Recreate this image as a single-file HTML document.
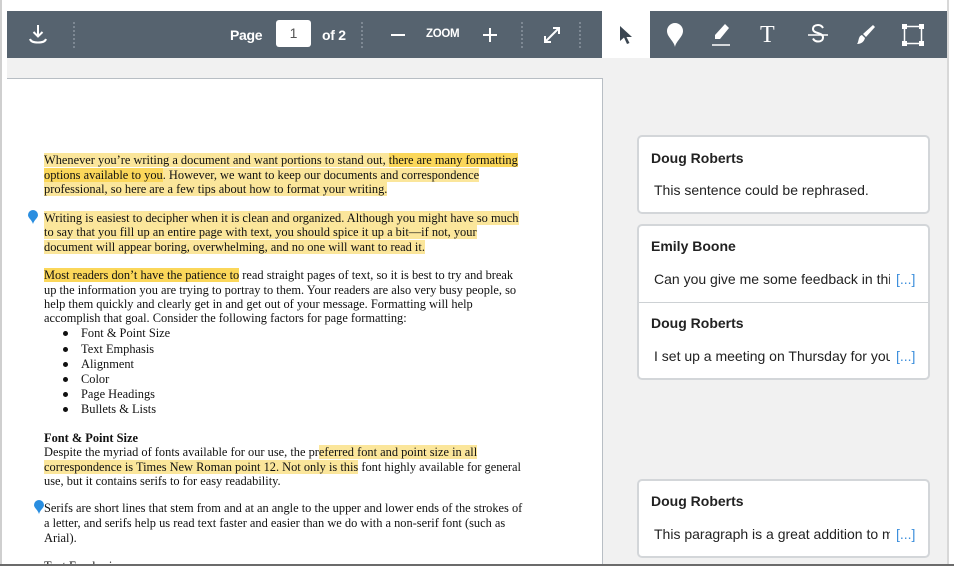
<!DOCTYPE html>
<html><head><meta charset="utf-8"><style>
*{margin:0;padding:0;box-sizing:border-box}
body{width:954px;height:572px;background:#fff;position:relative;overflow:hidden;font-family:"Liberation Sans",sans-serif}
.abs{position:absolute}
.tb{position:absolute;top:11px;height:47px;background:#56636f}
.sep{position:absolute;top:22px;height:26px;border-left:2px dotted #7d8893}
.tt{position:absolute;color:#fff;font-size:14px;font-weight:bold;top:27px;letter-spacing:-0.3px}
.ln{position:absolute;left:44px;font-family:"Liberation Serif",serif;font-size:12.4px;white-space:nowrap;color:#111;line-height:14px}
.h{background:#fbe69b}
.d{background:#fbd75a}
.card{position:absolute;left:637px;width:293px;background:#fff;border:2px solid #d3d6d9;border-radius:5px}
.nm{position:absolute;left:12px;font-size:14px;font-weight:bold;color:#222}
.bd{position:absolute;left:15px;font-size:14px;color:#222;white-space:nowrap;width:236px;overflow:hidden}
.more{position:absolute;left:257px;font-size:14px;color:#3d8fdc}
.bl{position:absolute;left:63px;width:5px;height:5px;border-radius:50%;background:#111}
</style></head><body>
<div class="abs" style="left:0;top:0;width:2px;height:566px;background:#cfcfcf"></div>
<div class="abs" style="left:947px;top:0;width:2px;height:566px;background:#d8d8d8"></div>
<div class="abs" style="left:7px;top:58px;width:940px;height:507px;background:#f1f1f1"></div>
<div class="abs" style="left:0;top:564px;width:954px;height:2px;background:#6b6b6b"></div>
<!-- page -->
<div class="abs" style="left:7px;top:78px;width:596px;height:486px;background:#fff;border-top:1px solid #b8bec4;border-right:1px solid #b8bec4"></div>

<!-- toolbar -->
<div class="tb" style="left:7px;width:595px"></div>
<div class="abs" style="left:602px;top:11px;width:48px;height:47px;background:#fff"></div>
<div class="tb" style="left:650px;width:297px"></div>
<svg class="abs" style="left:28px;top:24px" width="20" height="22" viewBox="0 0 20 22"><path d="M10 1v11M5.5 8l4.5 4.5 4.5-4.5" stroke="#fff" stroke-width="2" fill="none"/><path d="M2 15c1 3 4 3.5 8 3.5s7-.5 8-3.5" stroke="#fff" stroke-width="2" fill="none"/></svg>
<div class="sep" style="left:73px"></div>
<div class="tt" style="left:230px">Page</div>
<div class="abs" style="left:276px;top:20px;width:35px;height:27px;background:#fff;border-radius:3px;color:#555;font-size:14px;text-align:center;line-height:27px">1</div>
<div class="tt" style="left:322px">of 2</div>
<div class="sep" style="left:361px"></div>
<div class="abs" style="left:391px;top:34px;width:14px;height:2px;background:#fff"></div>
<div class="tt" style="left:426px;font-size:11.5px;top:28px">ZOOM</div>
<div class="abs" style="left:483px;top:34px;width:14px;height:2px;background:#fff"></div>
<div class="abs" style="left:489px;top:28px;width:2px;height:14px;background:#fff"></div>
<div class="sep" style="left:521px"></div>
<svg class="abs" style="left:542px;top:25px" width="20" height="20" viewBox="0 0 20 20"><path d="M3 17L17 3M11 3h6v6M3 11v6h6" stroke="#fff" stroke-width="2" fill="none"/></svg>
<div class="sep" style="left:579px"></div>
<svg class="abs" style="left:619px;top:25px" width="14" height="22" viewBox="0 0 14 22"><path d="M1 1v15l4-3.5 3 6.5 2.5-1-3-6H13z" fill="#3b4651"/></svg>
<svg class="abs" style="left:665px;top:22px" width="20" height="26" viewBox="0 0 20 26"><path d="M10 25C9 19 2 15 2 9a8 8 0 0116 0c0 6-7 10-8 16z" fill="#fff"/></svg>
<svg class="abs" style="left:710px;top:22px" width="22" height="26" viewBox="0 0 22 26"><path d="M15 2l4 4-9 11H5v-4z" fill="#fff"/><path d="M2 23h18" stroke="#fff" stroke-width="1.5"/></svg>
<div class="abs" style="left:760px;top:23px;color:#fff;font-family:'Liberation Serif',serif;font-size:24px;line-height:24px">T</div>
<svg class="abs" style="left:807px;top:23px" width="22" height="24" viewBox="0 0 22 24"><path d="M16 5c-1-2-3-3-5-3-3 0-5 1.5-5 4 0 5 10 3 10 8.5 0 2.5-2 4-5 4-2.5 0-4-1-5-3" stroke="#fff" stroke-width="2" fill="none"/><path d="M1 12h20" stroke="#fff" stroke-width="1.5"/></svg>
<svg class="abs" style="left:856px;top:24px" width="20" height="22" viewBox="0 0 20 22"><path d="M17 1l2 2-9 10-3-3z" fill="#fff"/><path d="M6 11l3 3c-1 4-4 6-8 6 2-2 1-8 5-9z" fill="#fff"/></svg>
<svg class="abs" style="left:902px;top:24px" width="22" height="22" viewBox="0 0 22 22"><rect x="2.5" y="2.5" width="17" height="17" fill="none" stroke="#fff" stroke-width="1.5"/><rect x="0" y="0" width="5" height="5" fill="#fff"/><rect x="17" y="0" width="5" height="5" fill="#fff"/><rect x="0" y="17" width="5" height="5" fill="#fff"/><rect x="17" y="17" width="5" height="5" fill="#fff"/></svg>

<!-- doc text -->
<div class="ln" style="top:153px"><span class="h">Whenever you’re writing a document and want portions to stand out, </span><span class="d">there are many formatting</span></div>
<div class="ln" style="top:168px"><span class="d">options available to you</span><span class="h">. However, we want to keep our documents and correspondence</span></div>
<div class="ln" style="top:182px"><span class="h">professional, so here are a few tips about how to format your writing. </span></div>
<svg class="abs" style="left:28px;top:210px" width="10" height="14" viewBox="0 0 10 14"><path d="M5 14C4 10 0 8 0 5a5 5 0 0110 0c0 3-4 5-5 9z" fill="#2a8ee0"/></svg>
<div class="ln" style="top:211px"><span class="h">Writing is easiest to decipher when it is clean and organized. Although you might have so much</span></div>
<div class="ln" style="top:225px"><span class="h">to say that you fill up an entire page with text, you should spice it up a bit—if not, your</span></div>
<div class="ln" style="top:240px"><span class="h">document will appear boring, overwhelming, and no one will want to read it. </span></div>
<div class="ln" style="top:268px"><span class="d">Most readers don’t have the patience to</span> read straight pages of text, so it is best to try and break</div>
<div class="ln" style="top:283px">up the information you are trying to portray to them. Your readers are also very busy people, so</div>
<div class="ln" style="top:297px">help them quickly and clearly get in and get out of your message. Formatting will help</div>
<div class="ln" style="top:311px">accomplish that goal. Consider the following factors for page formatting:</div>
<div class="bl" style="top:331px"></div><div class="ln" style="top:326px;left:81px">Font &amp; Point Size</div>
<div class="bl" style="top:347px"></div><div class="ln" style="top:342px;left:81px">Text Emphasis</div>
<div class="bl" style="top:362px"></div><div class="ln" style="top:357px;left:81px">Alignment</div>
<div class="bl" style="top:377px"></div><div class="ln" style="top:372px;left:81px">Color</div>
<div class="bl" style="top:392px"></div><div class="ln" style="top:387px;left:81px">Page Headings</div>
<div class="bl" style="top:407px"></div><div class="ln" style="top:402px;left:81px">Bullets &amp; Lists</div>
<div class="ln" style="top:431px;font-weight:bold">Font &amp; Point Size</div>
<div class="ln" style="top:445px">Despite the myriad of fonts available for our use, the pr<span class="h">eferred font and point size in all </span></div>
<div class="ln" style="top:460px"><span class="h">correspondence is Times New Roman point 12. Not only is this</span> font highly available for general</div>
<div class="ln" style="top:474px">use, but it contains serifs to for easy readability.</div>
<svg class="abs" style="left:34px;top:500px" width="10" height="14" viewBox="0 0 10 14"><path d="M5 14C4 10 0 8 0 5a5 5 0 0110 0c0 3-4 5-5 9z" fill="#2a8ee0"/></svg>
<div class="ln" style="top:501px">Serifs are short lines that stem from and at an angle to the upper and lower ends of the strokes of</div>
<div class="ln" style="top:516px">a letter, and serifs help us read text faster and easier than we do with a non-serif font (such as</div>
<div class="ln" style="top:531px">Arial).</div>
<div class="ln" style="top:559px;height:5px;overflow:hidden">Text Emphasis</div>

<!-- comments -->
<div class="card" style="top:135px;height:79px"><div class="nm" style="top:13px">Doug Roberts</div><div class="bd" style="top:45px">This sentence could be rephrased.</div></div>
<div class="card" style="top:224px;height:156px">
<div class="nm" style="top:12px">Emily Boone</div><div class="bd" style="top:45px">Can you give me some feedback in this</div><div class="more" style="top:45px">[...]</div>
<div class="abs" style="left:0;top:76px;width:289px;height:1px;background:#cdd1d4"></div>
<div class="nm" style="top:89px">Doug Roberts</div><div class="bd" style="top:122px">I set up a meeting on Thursday for you</div><div class="more" style="top:122px">[...]</div>
</div>
<div class="card" style="top:479px;height:79px"><div class="nm" style="top:12px">Doug Roberts</div><div class="bd" style="top:45px">This paragraph is a great addition to my</div><div class="more" style="top:45px">[...]</div></div>
</body></html>
